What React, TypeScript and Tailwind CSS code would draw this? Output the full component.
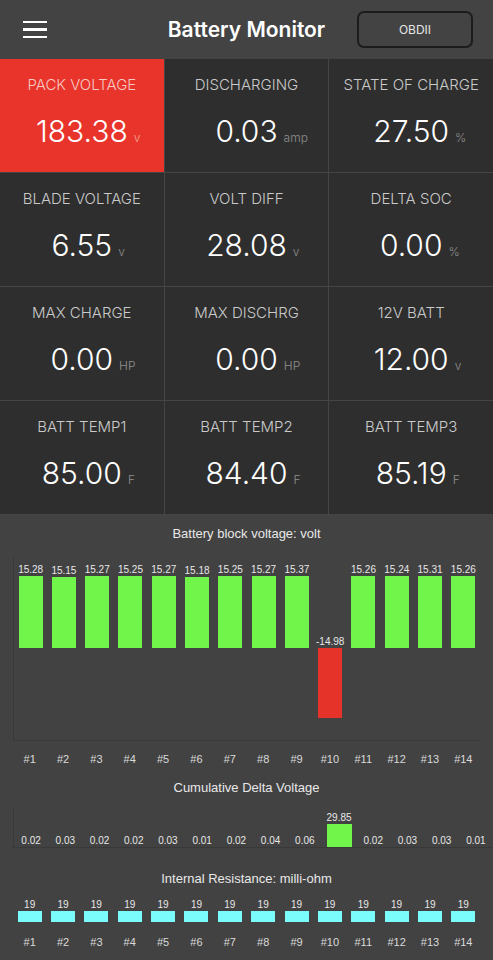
import React from "react";

type Tile = { label: string; value: string; unit: string; alert?: boolean };

const tiles: Tile[] = [
  { label: "PACK VOLTAGE", value: "183.38", unit: "v", alert: true },
  { label: "DISCHARGING", value: "0.03", unit: "amp" },
  { label: "STATE OF CHARGE", value: "27.50", unit: "%" },
  { label: "BLADE VOLTAGE", value: "6.55", unit: "v" },
  { label: "VOLT DIFF", value: "28.08", unit: "v" },
  { label: "DELTA SOC", value: "0.00", unit: "%" },
  { label: "MAX CHARGE", value: "0.00", unit: "HP" },
  { label: "MAX DISCHRG", value: "0.00", unit: "HP" },
  { label: "12V BATT", value: "12.00", unit: "v" },
  { label: "BATT TEMP1", value: "85.00", unit: "F" },
  { label: "BATT TEMP2", value: "84.40", unit: "F" },
  { label: "BATT TEMP3", value: "85.19", unit: "F" },
];

const blocks = [15.28, 15.15, 15.27, 15.25, 15.27, 15.18, 15.25, 15.27, 15.37, -14.98, 15.26, 15.24, 15.31, 15.26];
const deltas = [0.02, 0.03, 0.02, 0.02, 0.03, 0.01, 0.02, 0.04, 0.06, 29.85, 0.02, 0.03, 0.03, 0.01];
const resist = Array(14).fill(19);

const chartFont = { fontFamily: '"Liberation Sans", Arial, sans-serif' };

function StatTile({ t }: { t: Tile }) {
  return (
    <div className={`flex h-[113px] flex-col items-center pt-[17px] ${t.alert ? "bg-[#e8342a]" : "bg-[#2e2e2e]"}`}>
      <div className={`text-[15px] font-light leading-[18px] ${t.alert ? "text-[#f6c9c4]" : "text-[#cacaca]"}`}>{t.label}</div>
      <div className="mt-[19px] grid w-full grid-cols-[1fr_auto_1fr] items-baseline">
        <span />
        <span className="text-[30px] font-light leading-[36px] text-white">{t.value}</span>
        <span className={`pl-[6px] text-[12px] font-light ${t.alert ? "text-[#f3a59c]" : "text-[#8e8e8e]"}`}>{t.unit}</span>
      </div>
    </div>
  );
}

function SlotLabels() {
  return (
    <div className="mx-[13px] grid grid-cols-14">
      {blocks.map((_, i) => (
        <div key={i} className="text-center text-[11px] leading-[12px] text-[#dadada]">#{i + 1}</div>
      ))}
    </div>
  );
}

export default function App() {
  return (
    <div className="min-h-[960px] w-[493px] bg-[#424242]" style={{ fontFamily: "Inter, sans-serif" }}>
      <header className="grid h-[59px] grid-cols-[1fr_auto_1fr] items-center bg-[#434343]">
        <div className="flex flex-col gap-[5px] pl-[23px]">
          <span className="h-[2.5px] w-[24px] bg-white" />
          <span className="h-[2.5px] w-[24px] bg-white" />
          <span className="h-[2.5px] w-[24px] bg-white" />
        </div>
        <h1 className="text-[21px] font-semibold text-white">Battery Monitor</h1>
        <div className="flex justify-end pr-[20px]">
          <button className="h-[37px] w-[116px] rounded-[7px] border-2 border-[#1c1c1c] text-[12px] text-[#e6e6e6]">OBDII</button>
        </div>
      </header>

      <div className="grid grid-cols-3 gap-px bg-[#454545] pb-px">
        {tiles.map((t) => (
          <StatTile key={t.label} t={t} />
        ))}
      </div>

      <section className="pt-[12px] text-[#e8e8e8]" style={chartFont}>
        <h2 className="text-center text-[13px] leading-[14px]">Battery block voltage: volt</h2>
        <div className="mx-[13px] mt-[16px] grid h-[184px] grid-cols-14 grid-rows-[91px_1fr] border-b border-l border-[#393939]">
          {blocks.map((v, i) => (
            <div key={i} className="row-start-1 flex flex-col items-center justify-end" style={{ gridColumnStart: i + 1 }}>
              <span className="text-[10px] leading-[12px]">{v.toFixed(2)}</span>
              {v > 0 && <div className="w-[24px] bg-[#72f54b]" style={{ height: v * 4.71 }} />}
            </div>
          ))}
          {blocks.map((v, i) => (
            <div key={`n${i}`} className="row-start-2 flex justify-center" style={{ gridColumnStart: i + 1 }}>
              {v < 0 && <div className="w-[24px] bg-[#e6332a]" style={{ height: -v * 4.65 }} />}
            </div>
          ))}
        </div>
        <div className="mt-[12px]">
          <SlotLabels />
        </div>

        <h2 className="mt-[16px] text-center text-[13px] leading-[14px]">Cumulative Delta Voltage</h2>
        <div className="ml-[13px] mt-[13px] grid h-[40px] grid-cols-14 border-b border-l border-[#393939]">
          {deltas.map((v, i) => (
            <div key={i} className="flex flex-col items-center justify-end">
              <span className="text-[10px] leading-[12px]">{v.toFixed(2)}</span>
              {v > 1 && <div className="w-[25px] bg-[#72f54b]" style={{ height: v * 0.77 }} />}
            </div>
          ))}
        </div>

        <h2 className="mt-[24px] text-center text-[13px] leading-[14px]">Internal Resistance: milli-ohm</h2>
        <div className="mx-[13px] mt-[13px] grid grid-cols-14">
          {resist.map((v, i) => (
            <div key={i} className="flex flex-col items-center">
              <span className="text-[10px] leading-[12px]">{v}</span>
              <div className="h-[11px] w-[24px] bg-[#7afcfc]" />
            </div>
          ))}
        </div>
        <div className="mt-[14px]">
          <SlotLabels />
        </div>
      </section>
    </div>
  );
}
